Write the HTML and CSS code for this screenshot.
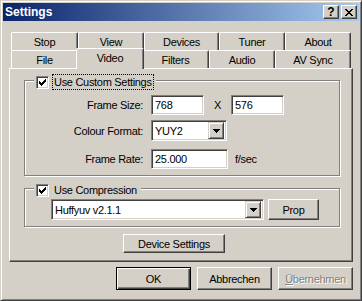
FILE: index.html
```html
<!DOCTYPE html>
<html lang="en">
<head>
    <meta charset="UTF-8">
    <title>Settings</title>
    <link rel="stylesheet" href="styles.css">
</head>
<body>
<div class="window">
    <div class="titlebar">
        <span class="title">Settings</span>
        <div class="caption-buttons">
            <div class="caption-btn help">?</div>
            <div class="caption-btn close">
                <svg width="8" height="7" viewBox="0 0 8 7" shape-rendering="crispEdges"><path d="M0 0h2v1h-2z M6 0h2v1h-2z M1 1h2v1h-2z M5 1h2v1h-2z M2 2h4v1h-4z M3 3h2v1h-2z M2 4h4v1h-4z M1 5h2v1h-2z M5 5h2v1h-2z M0 6h2v1h-2z M6 6h2v1h-2z" fill="#000"/></svg>
            </div>
        </div>
    </div>

    <div class="tabs">
        <div class="tab-row">
            <div class="tab w-stop">Stop</div>
            <div class="tab w-view">View</div>
            <div class="tab w-devices">Devices</div>
            <div class="tab w-tuner">Tuner</div>
            <div class="tab w-about">About</div>
        </div>
        <div class="tab-row">
            <div class="tab w-file">File</div>
            <div class="tab w-video active">Video</div>
            <div class="tab w-filters">Filters</div>
            <div class="tab w-audio">Audio</div>
            <div class="tab w-avsync">AV Sync</div>
        </div>
    </div>

    <div class="panel">
        <div class="group custom">
            <div class="legend">
                <span class="checkbox"><svg width="7" height="7" viewBox="0 0 7 7" shape-rendering="crispEdges"><path d="M0 2h1v3h-1z M1 3h1v3h-1z M2 4h1v3h-1z M3 3h1v3h-1z M4 2h1v3h-1z M5 1h1v3h-1z M6 0h1v3h-1z" fill="#000"/></svg></span>
                <span class="label focus">Use Custom Settings</span>
            </div>
            <div class="row first">
                <span class="field-label">Frame Size:</span>
                <div class="edit w-size">768</div>
                <span class="times">X</span>
                <div class="edit w-size">576</div>
            </div>
            <div class="row second">
                <span class="field-label">Colour Format:</span>
                <div class="combo w-format">
                    <span class="combo-text">YUY2</span>
                    <span class="drop"><svg width="7" height="4" viewBox="0 0 7 4" shape-rendering="crispEdges"><path d="M0 0h7v1h-7z M1 1h5v1h-5z M2 2h3v1h-3z M3 3h1v1h-1z" fill="#000"/></svg></span>
                </div>
            </div>
            <div class="row third">
                <span class="field-label">Frame Rate:</span>
                <div class="edit w-rate">25.000</div>
                <span class="unit">f/sec</span>
            </div>
        </div>

        <div class="group compression">
            <div class="legend">
                <span class="checkbox"><svg width="7" height="7" viewBox="0 0 7 7" shape-rendering="crispEdges"><path d="M0 2h1v3h-1z M1 3h1v3h-1z M2 4h1v3h-1z M3 3h1v3h-1z M4 2h1v3h-1z M5 1h1v3h-1z M6 0h1v3h-1z" fill="#000"/></svg></span>
                <span class="label">Use Compression</span>
            </div>
            <div class="codec-row">
                <div class="combo w-codec">
                    <span class="combo-text">Huffyuv v2.1.1</span>
                    <span class="drop"><svg width="7" height="4" viewBox="0 0 7 4" shape-rendering="crispEdges"><path d="M0 0h7v1h-7z M1 1h5v1h-5z M2 2h3v1h-3z M3 3h1v1h-1z" fill="#000"/></svg></span>
                </div>
                <div class="btn w-prop">Prop</div>
            </div>
        </div>

        <div class="btn device">Device Settings</div>
    </div>

    <div class="buttons">
        <div class="btn dialog default">OK</div>
        <div class="btn dialog">Abbrechen</div>
        <div class="btn dialog disabled"><u>Ü</u>bernehmen</div>
    </div>
</div>
</body>
</html>
```

FILE: styles.css
```css
body {
    margin: 0;
    background: #d4d0c8;
}
.window {
    width: 362px;
    height: 301px;
    box-sizing: border-box;
    border: 1px solid;
    border-color: #d4d0c8 #404040 #404040 #d4d0c8;
    box-shadow: inset 1px 1px #fff, inset -1px -1px #808080;
    padding: 2px;
    background: #d4d0c8;
    font-family: "Liberation Sans", Arial, sans-serif;
    font-size: 11px;
    letter-spacing: -0.3px;
    color: #000;
}

/* title bar */
.titlebar {
    height: 18px;
    display: flex;
    align-items: center;
    padding: 0 2px;
    background: linear-gradient(to right, #0a246a, #a6caf0);
}
.title {
    color: #fff;
    font-weight: bold;
    font-size: 12px;
    letter-spacing: 0;
}
.caption-buttons {
    margin-left: auto;
    display: flex;
    gap: 2px;
}
.caption-btn {
    width: 16px;
    height: 14px;
    box-sizing: border-box;
    border: 1px solid;
    border-color: #fff #404040 #404040 #fff;
    box-shadow: inset -1px -1px #808080;
    background: #d4d0c8;
    display: flex;
    align-items: center;
    justify-content: center;
}
.help {
    font-weight: bold;
    font-size: 12px;
    line-height: 12px;
    letter-spacing: 0;
}

/* tabs */
.tabs {
    margin: 11px 0 0 8px;
}
.tab-row {
    display: flex;
    align-items: flex-start;
}
.tab {
    height: 18px;
    box-sizing: border-box;
    border: 1px solid;
    border-color: #fff #404040 transparent #fff;
    border-bottom: none;
    border-radius: 2px 2px 0 0;
    box-shadow: inset -1px 0 #808080;
    background: #d4d0c8;
    display: flex;
    align-items: center;
    justify-content: center;
}
.tab.active {
    position: relative;
    z-index: 1;
    height: 21px;
    margin: -2px -2px -1px;
    padding-bottom: 3px;
}
.w-stop { width: 67px; }
.w-view { width: 66px; }
.w-devices { width: 75px; }
.w-tuner { width: 66px; }
.w-about { width: 66px; }
.w-file { width: 67px; }
.w-video { width: 68px; }
.w-filters { width: 67px; }
.w-audio { width: 66px; }
.w-avsync { width: 76px; }

/* property page */
.panel {
    margin-left: 6px;
    width: 344px;
    height: 194px;
    box-sizing: border-box;
    border: 1px solid;
    border-color: #fff #404040 #404040 #fff;
    box-shadow: inset -1px -1px #808080;
    padding-top: 11px;
}
.group {
    margin-left: 14px;
    width: 316px;
    box-sizing: border-box;
    border: 1px solid #808080;
    box-shadow: inset 1px 1px #fff, 1px 1px #fff;
}
.group.custom {
    height: 96px;
}
.group.compression {
    height: 39px;
    margin-top: 12px;
}
.legend {
    display: flex;
    align-items: center;
    width: max-content;
    height: 16px;
    margin: -7px 0 0 9px;
    padding: 0 2px;
    background: #d4d0c8;
}
.checkbox {
    width: 13px;
    height: 13px;
    box-sizing: border-box;
    border: 1px solid;
    border-color: #808080 #fff #fff #808080;
    box-shadow: inset 1px 1px #404040, inset -1px -1px #d4d0c8;
    background: #fff;
    display: flex;
    align-items: center;
    justify-content: center;
}
.label {
    margin-left: 3px;
    padding: 1px 1px 1px 1px;
    border: 1px solid transparent;
    line-height: 12px;
}
.label.focus {
    border: 1px dotted #000;
}

.row {
    display: flex;
    align-items: center;
    height: 20px;
}
.row.first { margin-top: 5px; }
.row.second { margin-top: 5px; height: 21px; }
.row.third { margin-top: 8px; }
.field-label {
    width: 118px;
    margin-right: 8px;
    text-align: right;
}
.edit {
    height: 20px;
    box-sizing: border-box;
    border: 1px solid;
    border-color: #808080 #fff #fff #808080;
    box-shadow: inset 1px 1px #404040, inset -1px -1px #d4d0c8;
    background: #fff;
    padding-left: 3px;
    display: flex;
    align-items: center;
}
.w-size { width: 53px; }
.w-rate { width: 77px; }
.times {
    width: 27px;
    text-align: center;
}
.unit {
    margin-left: 7px;
}

.combo {
    height: 21px;
    box-sizing: border-box;
    border: 1px solid;
    border-color: #808080 #fff #fff #808080;
    box-shadow: inset 1px 1px #404040, inset -1px -1px #d4d0c8;
    background: #fff;
    padding: 2px;
    display: flex;
    align-items: center;
}
.combo-text {
    flex: 1;
    padding-left: 1px;
}
.drop {
    width: 16px;
    height: 17px;
    box-sizing: border-box;
    border: 1px solid;
    border-color: #d4d0c8 #404040 #404040 #d4d0c8;
    box-shadow: inset 1px 1px #fff, inset -1px -1px #808080;
    background: #d4d0c8;
    display: flex;
    align-items: center;
    justify-content: center;
}
.w-format { width: 76px; }
.codec-row {
    display: flex;
    margin: 1px 0 0 26px;
}
.w-codec { width: 213px; }

.btn {
    box-sizing: border-box;
    border: 1px solid;
    border-color: #fff #404040 #404040 #fff;
    box-shadow: inset -1px -1px #808080;
    background: #d4d0c8;
    display: flex;
    align-items: center;
    justify-content: center;
}
.w-prop {
    width: 51px;
    height: 21px;
    margin-left: 4px;
}
.btn.device {
    width: 102px;
    height: 19px;
    margin: 7px 0 0 113px;
}

/* dialog buttons */
.buttons {
    display: flex;
    justify-content: flex-end;
    gap: 6px;
    margin-top: 5px;
    padding-right: 6px;
}
.btn.dialog {
    width: 75px;
    height: 23px;
}
.btn.default {
    border: 1px solid #000;
    box-shadow: inset 1px 1px #fff, inset -1px -1px #404040, inset -2px -2px #808080;
}
.btn.disabled {
    color: #808080;
    text-shadow: 1px 1px #fff;
}
```
